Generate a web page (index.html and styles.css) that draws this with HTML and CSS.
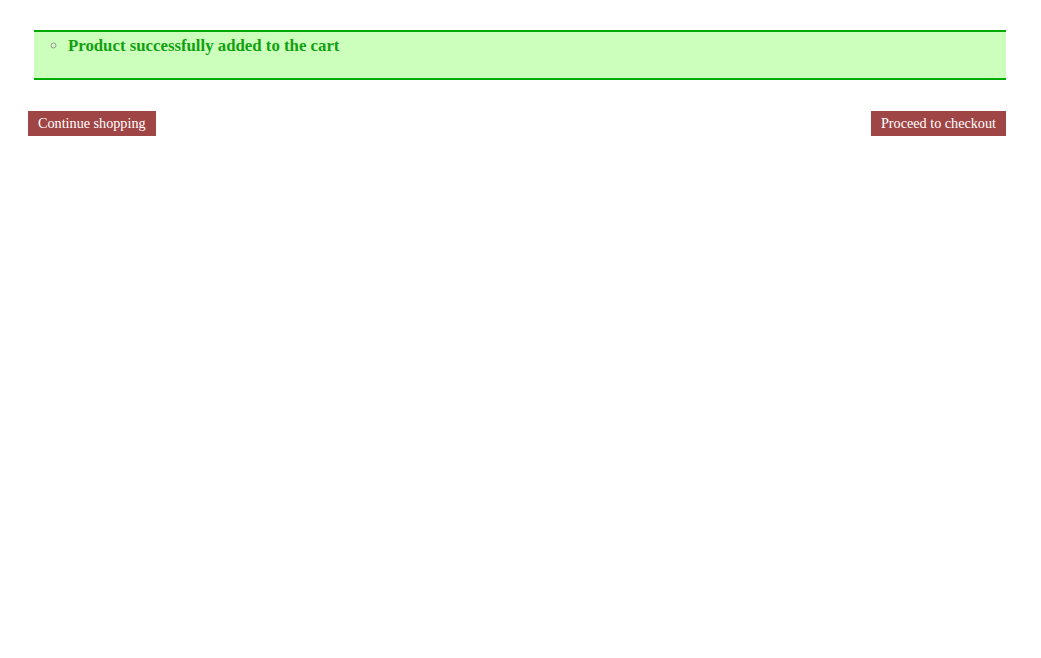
FILE: index.html
```html
<!DOCTYPE html>
<html lang="en">
<head>
<meta charset="utf-8">
<title>Cart</title>
<link rel="stylesheet" href="styles.css">
</head>
<body>
<div class="page">
  <div class="notice">
    <ul class="notice-list">
      <li>Product successfully added to the cart</li>
    </ul>
  </div>
  <div class="actions">
    <a class="btn" href="#">Continue shopping</a>
    <a class="btn" href="#">Proceed to checkout</a>
  </div>
</div>
</body>
</html>
```

FILE: styles.css
```css
html, body {
  margin: 0;
  padding: 0;
  background: #ffffff;
}

.page {
  padding: 30px 35px 0 28px;
  font-family: "Liberation Serif", "DejaVu Serif", serif;
}

.notice {
  margin-left: 6px;
  background: #ccffbb;
  border-top: 2px solid #00aa00;
  border-bottom: 2px solid #00aa00;
  height: 46px;
  box-sizing: content-box;
}

.notice-list {
  margin: 0;
  padding: 4px 0 0 34px;
  list-style: circle;
}

.notice-list li {
  color: #11a011;
  font-weight: bold;
  font-size: 16.8px;
  line-height: 19px;
}

.notice-list li::marker {
  color: #999999;
}

.actions {
  display: flex;
  justify-content: space-between;
  margin-top: 31px;
}

.btn {
  display: inline-block;
  background: #a04545;
  color: #ffffff;
  text-decoration: none;
  font-size: 14.2px;
  line-height: 25px;
  height: 25px;
  padding: 0 10px;
}
```
